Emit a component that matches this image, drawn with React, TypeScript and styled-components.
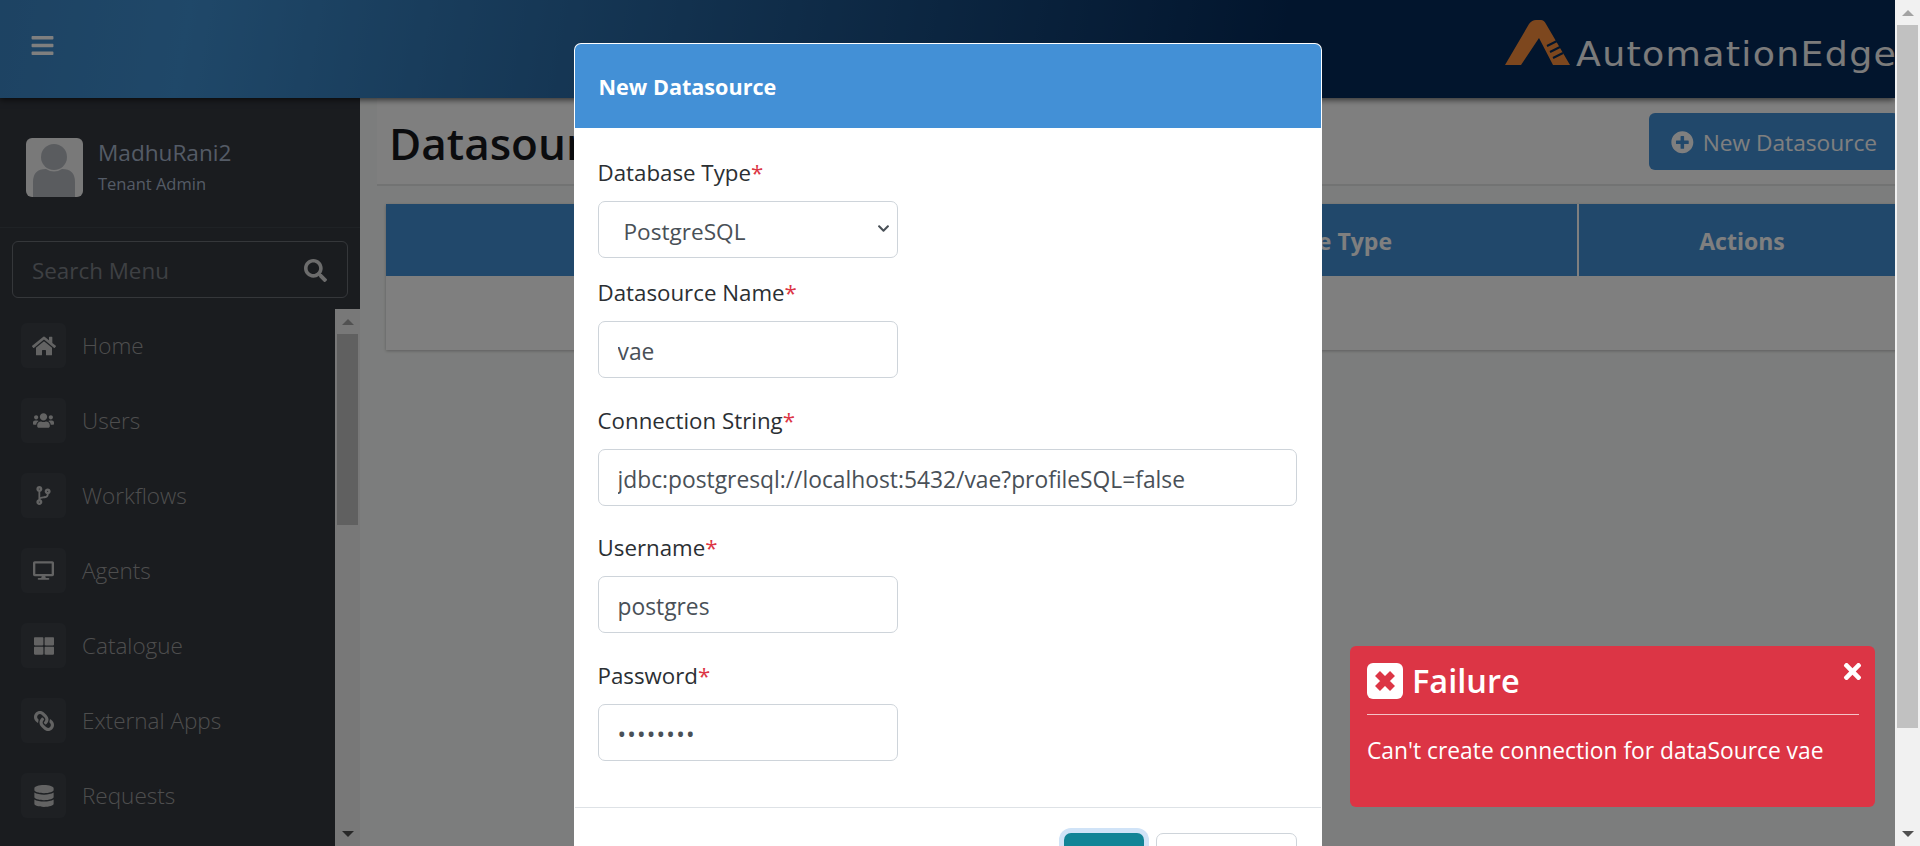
import React from 'react';
import styled, { createGlobalStyle } from 'styled-components';
import {
  FaBars,
  FaChevronDown,
  FaCodeBranch,
  FaDatabase,
  FaDesktop,
  FaHome,
  FaLink,
  FaPlusCircle,
  FaSearch,
  FaThLarge,
  FaTimes,
  FaUsers,
} from 'react-icons/fa';

const GlobalStyle = createGlobalStyle`
  * { box-sizing: border-box; }
  html, body { margin: 0; height: 100%; overflow: hidden; }
  body {
    font-family: "Open Sans", "Noto Sans", "Liberation Sans", sans-serif;
    background: #fff;
    color: #212529;
  }
`;

const Screen = styled.div`
  display: flex;
  width: 1920px;
  height: 846px;
  overflow: hidden;
`;

const Page = styled.div`
  position: relative;
  flex: 1;
  min-width: 0;
  overflow: hidden;
  display: flex;
  flex-direction: column;
  background: #f9fbfa;
`;

const TopBar = styled.header`
  height: 98px;
  flex-shrink: 0;
  display: flex;
  align-items: flex-start;
  justify-content: space-between;
  background: linear-gradient(100deg, #3b86c6 0%, #3f90d2 10%, #042a5a 68%, #042a5a 100%);
  box-shadow: 0 2px 6px rgba(0, 0, 0, 0.6);
  position: relative;
  z-index: 1;
  overflow: hidden;
`;

const MenuToggle = styled.div`
  margin: 33px 0 0 30px;
  color: #fff;
  font-size: 25px;
  line-height: 1;
`;

const Logo = styled.div`
  display: flex;
  align-items: flex-end;
  gap: 6px;
  margin: 20px 0 0;
  flex-shrink: 0;
  width: 390px;
`;

const LogoText = styled.span`
  display: inline-block;
  font-family: "DejaVu Sans", sans-serif;
  font-size: 33px;
  line-height: 33px;
  letter-spacing: 1.2px;
  color: #f6f6f6;
  white-space: nowrap;
  margin-bottom: -6px;
  transform: scaleX(1.1);
  transform-origin: left center;
`;

const Body = styled.div`
  flex: 1;
  display: flex;
  min-height: 0;
`;

const Sidebar = styled.aside`
  width: 360px;
  flex-shrink: 0;
  background: #34383f;
  display: flex;
  flex-direction: column;
`;

const Profile = styled.div`
  height: 130px;
  padding: 40px 0 0 26px;
  display: flex;
  gap: 15px;
  border-bottom: 1px solid #3f444b;
`;

const Avatar = styled.div`
  width: 57px;
  height: 59px;
  border-radius: 6px;
  background: #f2f2f2;
  overflow: hidden;
`;

const ProfileText = styled.div`
  display: flex;
  flex-direction: column;
`;

const UserName = styled.div`
  font-size: 22.6px;
  line-height: 30px;
  color: #a9b7cc;
`;

const UserRole = styled.div`
  font-size: 16.5px;
  line-height: 31px;
  color: #a9b7cc;
`;

const SearchBox = styled.div`
  margin: 13px 12px 11px 12px;
  height: 57px;
  border: 1px solid #6a6e74;
  border-radius: 6px;
  display: flex;
  align-items: center;
  justify-content: space-between;
  padding: 2px 20px 0 19px;
`;

const SearchLabel = styled.span`
  font-size: 22.4px;
  color: #7d8187;
`;

const SearchIcon = styled.span`
  display: flex;
  font-size: 23px;
  color: #d8d8d8;
`;

const MenuArea = styled.div`
  flex: 1;
  min-height: 0;
  display: flex;
  overflow: hidden;
`;

const MenuList = styled.nav`
  flex: 1;
  padding: 14px 0 0 21px;
  display: flex;
  flex-direction: column;
  gap: 30px;
`;

const MenuItem = styled.div`
  display: flex;
  align-items: center;
  gap: 16px;
  height: 45px;
  flex-shrink: 0;
  font-size: 22.5px;
  font-weight: 300;
  color: #9c9c9c;
`;

const MenuIcon = styled.span<{ $size: number; $flip?: boolean }>`
  width: 45px;
  height: 45px;
  border-radius: 6px;
  background: #3c4147;
  display: flex;
  align-items: center;
  justify-content: center;
  font-size: ${({ $size }) => $size}px;
  color: #c6c6c6;
  svg {
    transform: ${({ $flip }) => ($flip ? 'scaleX(-1)' : 'none')};
  }
`;

const ScrollTrack = styled.div<{ $width: number }>`
  width: ${({ $width }) => $width}px;
  flex-shrink: 0;
  background: #f1f1f1;
  display: flex;
  flex-direction: column;
  align-items: center;
`;

const ScrollArrow = styled.div<{ $down?: boolean }>`
  height: 25px;
  flex-shrink: 0;
  display: flex;
  align-items: center;
  justify-content: center;
  &::after {
    content: '';
    border-left: 6px solid transparent;
    border-right: 6px solid transparent;
    ${({ $down }) =>
      $down ? 'border-top: 6px solid #505050;' : 'border-bottom: 6px solid #a3a3a3;'}
  }
`;

const ScrollThumb = styled.div<{ $height: number }>`
  width: 21px;
  height: ${({ $height }) => $height}px;
  background: #c1c1c1;
`;

const ScrollGap = styled.div`
  flex: 1;
`;

const Content = styled.main`
  flex: 1;
  min-width: 0;
  padding-left: 17px;
`;

const TitleRow = styled.div`
  width: 1530px;
  height: 88px;
  display: flex;
  align-items: flex-start;
  justify-content: space-between;
  padding: 15px 8px 0 12px;
  border-bottom: 2px solid #e4e6e6;
  background: #ffffff;
`;

const Title = styled.h1`
  margin: 0;
  font-size: 44px;
  font-weight: 600;
  line-height: 60px;
  color: #16191c;
`;

const NewButton = styled.div`
  height: 57px;
  width: 250px;
  padding: 2px 22px 0;
  display: flex;
  align-items: center;
  gap: 9px;
  border-radius: 6px;
  background: #4390d6;
  color: #fff;
  font-size: 22.7px;
  white-space: nowrap;
`;

const DataTable = styled.div`
  width: 1530px;
  margin: 18px 0 0 9px;
  background: #fff;
  box-shadow: 0 1px 3px rgba(0, 0, 0, 0.25);
`;

const TableHead = styled.div`
  display: grid;
  grid-template-columns: 642px 549px 339px;
  height: 72px;
  background: #4390d6;
`;

const HeadCell = styled.div<{ $shift?: number }>`
  display: flex;
  align-items: center;
  justify-content: center;
  padding: 2px ${({ $shift }) => $shift ?? 0}px 0 0;
  font-size: 23px;
  font-weight: 700;
  color: #fff;
  border-left: 2px solid #fff;
  &:first-child { border-left: 0; }
`;

const TableBody = styled.div`
  height: 74px;
`;

const Backdrop = styled.div`
  position: absolute;
  inset: 0;
  z-index: 5;
  background: rgba(0, 0, 0, 0.5);
  display: flex;
  justify-content: center;
  align-items: flex-start;
  padding-top: 43px;
`;

const Modal = styled.div`
  width: 748px;
  flex-shrink: 0;
  background: #fff;
  border-radius: 7px 7px 0 0;
  border: 1px solid rgba(255, 255, 255, 0.9);
  overflow: hidden;
`;

const ModalHead = styled.div`
  height: 84px;
  padding: 0 24px;
  display: flex;
  align-items: center;
  background: #4390d6;
  color: #fff;
  font-size: 21.6px;
  font-weight: 700;
`;

const ModalForm = styled.form`
  padding: 30px 24px 19px 23px;
`;

const Field = styled.div<{ $gap: number }>`
  margin-bottom: ${({ $gap }) => $gap}px;
`;

const FieldLabel = styled.label`
  display: block;
  height: 30px;
  margin-bottom: 13px;
  font-size: 22.3px;
  line-height: 30px;
  color: #2b2f33;
`;

const Required = styled.span`
  color: #dc3545;
`;

const TextInput = styled.input<{ $wide?: boolean }>`
  display: block;
  width: ${({ $wide }) => ($wide ? '699px' : '300px')};
  height: 57px;
  padding: 4px 19px 0;
  border: 1px solid #ced4da;
  border-radius: 7px;
  font: inherit;
  font-size: 22.8px;
  color: #495057;
  background: #fff;
  outline: none;
`;

const PasswordInput = styled(TextInput)`
  letter-spacing: 1.2px;
`;

const SelectWrap = styled.div`
  position: relative;
  width: 300px;
`;

const SelectInput = styled.select`
  display: block;
  width: 100%;
  height: 57px;
  padding: 4px 40px 0 25px;
  appearance: none;
  border: 1px solid #ced4da;
  border-radius: 7px;
  font: inherit;
  font-size: 22.6px;
  color: #495057;
  background: #fff;
  outline: none;
`;

const SelectArrow = styled.span`
  position: absolute;
  top: 21px;
  right: 8px;
  display: flex;
  font-size: 13px;
  color: #495057;
  pointer-events: none;
`;

const ModalFoot = styled.div`
  border-top: 1px solid #dee2e6;
  padding: 25px 24px 20px;
  display: flex;
  justify-content: flex-end;
  gap: 12px;
`;

const ActionButton = styled.button<{ $primary?: boolean }>`
  height: 57px;
  width: ${({ $primary }) => ($primary ? '80px' : '141px')};
  border-radius: 7px;
  font: inherit;
  font-size: 21px;
  border: ${({ $primary }) => ($primary ? '0' : '1px solid #ced4da')};
  background: ${({ $primary }) => ($primary ? '#118496' : '#fff')};
  color: ${({ $primary }) => ($primary ? '#fff' : '#495057')};
  box-shadow: ${({ $primary }) => ($primary ? '0 0 0 5px #d0e3f7' : 'none')};
`;

const Toast = styled.div`
  position: absolute;
  z-index: 6;
  left: 1350px;
  top: 646px;
  width: 525px;
  height: 161px;
  padding: 16px 16px 0 17px;
  border-radius: 6px;
  background: #dc3545;
  color: #fff;
`;

const ToastHead = styled.div`
  display: flex;
  align-items: center;
  gap: 9px;
  height: 37px;
`;

const ToastTitle = styled.span`
  font-size: 32.5px;
  font-weight: 600;
  line-height: 37px;
`;

const ToastClose = styled.span`
  position: absolute;
  top: 13px;
  right: 10px;
  display: flex;
  font-size: 25px;
`;

const ToastRule = styled.hr`
  margin: 15px 0 0;
  border: 0;
  border-top: 1px solid rgba(255, 255, 255, 0.7);
`;

const ToastText = styled.p`
  margin: 21px 0 0;
  font-size: 22.8px;
  line-height: 30px;
  white-space: nowrap;
`;

const menuItems = [
  { label: 'Home', icon: <FaHome />, size: 24 },
  { label: 'Users', icon: <FaUsers />, size: 21 },
  { label: 'Workflows', icon: <FaCodeBranch />, size: 19 },
  { label: 'Agents', icon: <FaDesktop />, size: 21 },
  { label: 'Catalogue', icon: <FaThLarge />, size: 20 },
  { label: 'External Apps', icon: <FaLink />, size: 20, flip: true },
  { label: 'Requests', icon: <FaDatabase />, size: 22 },
];

const LogoMark = () => (
  <svg width="65" height="45" viewBox="0 0 65 45">
    <path
      d="M0 45 L24 4 Q27 0 31 0 L36 0 Q39 0 41 4 L65 45 L48 45 L34 18 L16 45 Z"
      fill="#fb8f3c"
    />
    <path
      d="M42 26 L52 21 M45 32 L55 27 M48 38 L58 33"
      stroke="#042a5a"
      strokeWidth="2"
    />
  </svg>
);

const AvatarPicture = () => (
  <svg width="57" height="59" viewBox="0 0 57 59">
    <circle cx="28" cy="19" r="13" fill="#b4b8be" />
    <path
      d="M7 59 L7 44 Q7 31 20 31 Q28 36 36 31 Q49 31 49 44 L49 59 Z"
      fill="#b4b8be"
    />
  </svg>
);

const FailureIcon = () => (
  <svg width="36" height="36" viewBox="0 0 36 36">
    <rect width="36" height="36" rx="6" fill="#fff" />
    <path d="M10.5 10.5 L25.5 25.5 M25.5 10.5 L10.5 25.5" stroke="#dc3545" strokeWidth="7" />
  </svg>
);

const App = () => (
  <Screen>
    <GlobalStyle />
    <Page>
      <TopBar>
        <MenuToggle>
          <FaBars />
        </MenuToggle>
        <Logo>
          <LogoMark />
          <LogoText>AutomationEdge</LogoText>
        </Logo>
      </TopBar>
      <Body>
        <Sidebar>
          <Profile>
            <Avatar>
              <AvatarPicture />
            </Avatar>
            <ProfileText>
              <UserName>MadhuRani2</UserName>
              <UserRole>Tenant Admin</UserRole>
            </ProfileText>
          </Profile>
          <SearchBox>
            <SearchLabel>Search Menu</SearchLabel>
            <SearchIcon>
              <FaSearch />
            </SearchIcon>
          </SearchBox>
          <MenuArea>
            <MenuList>
              {menuItems.map((item) => (
                <MenuItem key={item.label}>
                  <MenuIcon $size={item.size} $flip={item.flip}>
                    {item.icon}
                  </MenuIcon>
                  {item.label}
                </MenuItem>
              ))}
            </MenuList>
            <ScrollTrack $width={25}>
              <ScrollArrow />
              <ScrollThumb $height={191} />
              <ScrollGap />
              <ScrollArrow $down />
            </ScrollTrack>
          </MenuArea>
        </Sidebar>
        <Content>
          <TitleRow>
            <Title>Datasources</Title>
            <NewButton>
              <FaPlusCircle />
              New Datasource
            </NewButton>
          </TitleRow>
          <DataTable>
            <TableHead>
              <HeadCell>Datasource Name</HeadCell>
              <HeadCell $shift={15}>Datasource Type</HeadCell>
              <HeadCell $shift={11}>Actions</HeadCell>
            </TableHead>
            <TableBody />
          </DataTable>
        </Content>
      </Body>
      <Backdrop>
        <Modal>
          <ModalHead>New Datasource</ModalHead>
          <ModalForm>
            <Field $gap={20}>
              <FieldLabel>
                Database Type<Required>*</Required>
              </FieldLabel>
              <SelectWrap>
                <SelectInput defaultValue="PostgreSQL">
                  <option>PostgreSQL</option>
                </SelectInput>
                <SelectArrow>
                  <FaChevronDown />
                </SelectArrow>
              </SelectWrap>
            </Field>
            <Field $gap={28}>
              <FieldLabel>
                Datasource Name<Required>*</Required>
              </FieldLabel>
              <TextInput defaultValue="vae" />
            </Field>
            <Field $gap={27}>
              <FieldLabel>
                Connection String<Required>*</Required>
              </FieldLabel>
              <TextInput $wide defaultValue="jdbc:postgresql://localhost:5432/vae?profileSQL=false" />
            </Field>
            <Field $gap={28}>
              <FieldLabel>
                Username<Required>*</Required>
              </FieldLabel>
              <TextInput defaultValue="postgres" />
            </Field>
            <Field $gap={27}>
              <FieldLabel>
                Password<Required>*</Required>
              </FieldLabel>
              <PasswordInput type="password" defaultValue="postgres" />
            </Field>
          </ModalForm>
          <ModalFoot>
            <ActionButton type="button" $primary>
              Test
            </ActionButton>
            <ActionButton type="button">Cancel</ActionButton>
          </ModalFoot>
        </Modal>
      </Backdrop>
      <Toast>
        <ToastHead>
          <FailureIcon />
          <ToastTitle>Failure</ToastTitle>
        </ToastHead>
        <ToastClose>
          <FaTimes />
        </ToastClose>
        <ToastRule />
        <ToastText>Can't create connection for dataSource vae</ToastText>
      </Toast>
    </Page>
    <ScrollTrack $width={25}>
      <ScrollArrow />
      <ScrollThumb $height={703} />
      <ScrollGap />
      <ScrollArrow $down />
    </ScrollTrack>
  </Screen>
);

export default App;
